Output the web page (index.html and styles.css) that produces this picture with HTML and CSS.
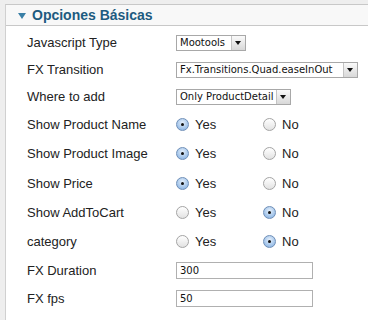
FILE: index.html
```html
<!DOCTYPE html>
<html lang="es">
<head>
    <meta charset="UTF-8">
    <title>Opciones Básicas</title>
    <link rel="stylesheet" href="styles.css">
</head>
<body>
    <div class="panel">
        <h3 class="panel-title"><span class="toggle"></span>Opciones Básicas</h3>
        <div class="params">
            <div class="row sel-row">
                <span class="label">Javascript Type</span>
                <span class="select w-js">Mootools<span class="arrow"></span></span>
            </div>
            <div class="row sel-row">
                <span class="label">FX Transition</span>
                <span class="select w-fx">Fx.Transitions.Quad.easeInOut<span class="arrow"></span></span>
            </div>
            <div class="row sel-row">
                <span class="label">Where to add</span>
                <span class="select w-where">Only ProductDetail<span class="arrow"></span></span>
            </div>
            <div class="row radio-row">
                <span class="label">Show Product Name</span>
                <span class="opt"><span class="radio checked"></span>Yes</span>
                <span class="opt"><span class="radio"></span>No</span>
            </div>
            <div class="row radio-row">
                <span class="label">Show Product Image</span>
                <span class="opt"><span class="radio checked"></span>Yes</span>
                <span class="opt"><span class="radio"></span>No</span>
            </div>
            <div class="row radio-row tall">
                <span class="label">Show Price</span>
                <span class="opt"><span class="radio checked"></span>Yes</span>
                <span class="opt"><span class="radio"></span>No</span>
            </div>
            <div class="row radio-row">
                <span class="label">Show AddToCart</span>
                <span class="opt"><span class="radio"></span>Yes</span>
                <span class="opt"><span class="radio checked"></span>No</span>
            </div>
            <div class="row radio-row">
                <span class="label">category</span>
                <span class="opt"><span class="radio"></span>Yes</span>
                <span class="opt"><span class="radio checked"></span>No</span>
            </div>
            <div class="row input-row first-input">
                <span class="label">FX Duration</span>
                <span class="text-input">300</span>
            </div>
            <div class="row input-row">
                <span class="label">FX fps</span>
                <span class="text-input">50</span>
            </div>
        </div>
    </div>
</body>
</html>
```

FILE: styles.css
```css
html, body { height: 320px; }
body { margin: 0; background: #eeeeee; font-family: "Liberation Sans", Arial, sans-serif; color: #222; overflow: hidden; }
.panel { margin: 4px 0 0 5px; background: #fff; border-top: 1px solid #c8c8c8; border-left: 1px solid #d0d0d0; height: 315px; overflow: hidden; }
.panel-title { margin: 0; height: 20px; background: #f8f8f8; border-bottom: 1px solid #c8c8c8; font-size: 14px; font-weight: bold; color: #1d5b80; display: flex; align-items: center; padding-left: 12px; }
.toggle { width: 0; height: 0; border-left: 4px solid transparent; border-right: 4px solid transparent; border-top: 6px solid #3a7fa6; margin-right: 6px; margin-top: 1px; }
.params { padding-top: 3px; }
.row { display: flex; align-items: center; padding-left: 21px; font-size: 13px; }
.sel-row { height: 27px; }
.radio-row { height: 29px; }
.radio-row.tall { height: 30px; }
.input-row { height: 27px; }
.input-row.first-input { height: 29px; }
.label { width: 149px; flex: none; }
.select { position: relative; display: flex; align-items: center; height: 16px; border: 1px solid #a8a8a8; background: #fff; font-family: "DejaVu Sans", Verdana, sans-serif; font-size: 10px; color: #111; padding-left: 3px; box-sizing: border-box; }
.w-js { width: 70px; }
.w-fx { width: 182px; }
.w-where { width: 115px; }
.arrow { position: absolute; right: 0; top: 0; bottom: 0; width: 13px; background: linear-gradient(#fafafa, #d8d8d8); border-left: 1px solid #c4c4c4; }
.arrow::after { content: ""; position: absolute; left: 3px; top: 5px; border-left: 3px solid transparent; border-right: 3px solid transparent; border-top: 4px solid #111; }
.opt { display: flex; align-items: center; width: 87px; flex: none; }
.radio { width: 13px; height: 13px; border-radius: 50%; border: 1px solid #a4a4a4; background: linear-gradient(#ffffff, #e2e2e2); margin-right: 6px; position: relative; box-sizing: border-box; }
.radio.checked { border-color: #6f8fb8; background: radial-gradient(circle at 50% 35%, #e6f0fb, #9cc0e8 70%, #7ea6d6); }
.radio.checked::after { content: ""; position: absolute; left: 4px; top: 4px; width: 3px; height: 3px; border-radius: 50%; background: #111; }
.text-input { display: flex; align-items: center; width: 137px; height: 17px; border: 1px solid #b0b0b0; box-sizing: border-box; font-family: "DejaVu Sans", Verdana, sans-serif; font-size: 10px; color: #111; padding-left: 3px; }
```
